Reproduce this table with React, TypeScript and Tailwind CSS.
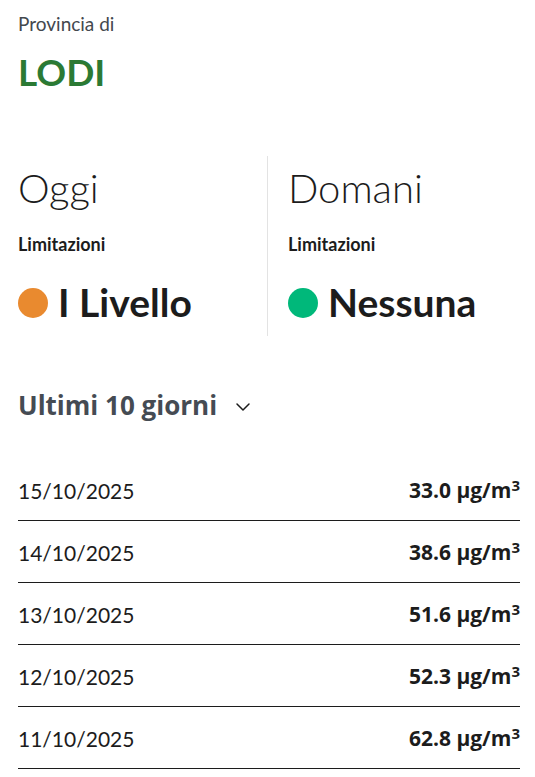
import { ChevronDown } from "lucide-react";

const rows = [
  { date: "15/10/2025", value: "33.0" },
  { date: "14/10/2025", value: "38.6" },
  { date: "13/10/2025", value: "51.6" },
  { date: "12/10/2025", value: "52.3" },
  { date: "11/10/2025", value: "62.8" },
];

const title = { fontFamily: "Lato, 'Noto Sans', sans-serif" };
const open = { fontFamily: "'Open Sans', sans-serif" };

function Day({ label, level, dot }: { label: string; level: string; dot: string }) {
  return (
    <div className="flex flex-col">
      <h2 className="text-[40px] font-light leading-none text-[#1c1c1c]">{label}</h2>
      <p className="mt-[27px] text-[18px] font-bold leading-none text-[#1c1c1c]">Limitazioni</p>
      <div className="mt-[30px] flex items-center gap-[10px]">
        <span className={`size-[30px] rounded-full ${dot}`} />
        <span className="text-[39px] font-bold leading-none text-[#1c1c1c]">{level}</span>
      </div>
    </div>
  );
}

export default function App() {
  return (
    <div className="bg-white pl-[18px] pr-[15px] pt-[14px]" style={title}>
      <p className="text-[19px] leading-none text-[#43484e]">Provincia di</p>
      <h1 className="mt-[20px] text-[37px] font-bold leading-none text-[#2b7a34]">LODI</h1>

      <div className="mt-[66px] grid grid-cols-[250px_1fr]">
        <div className="border-r border-[#e3e3e3] pt-[12px] pb-[14px]">
          <Day label="Oggi" level="I Livello" dot="bg-[#e98a2f]" />
        </div>
        <div className="pl-[20px] pt-[12px] pb-[14px]">
          <Day label="Domani" level="Nessuna" dot="bg-[#00b87a]" />
        </div>
      </div>

      <button className="mt-[55px] flex items-center gap-[14px] text-[#454b53]" style={open}>
        <span className="text-[26px] font-bold leading-none">Ultimi 10 giorni</span>
        <ChevronDown className="mt-[4px] size-[24px] text-[#1c1c1c]" strokeWidth={1.5} />
      </button>

      <ul className="mt-[40px]">
        {rows.map((r) => (
          <li
            key={r.date}
            className="flex h-[62px] items-center justify-between border-b border-[#1c1c1c] pt-[2px] text-[#1c1c1c]"
          >
            <span className="text-[21px] leading-none">{r.date}</span>
            <span className="text-[21px] font-bold leading-none" style={open}>
              {r.value} μg/m<sup className="text-[15px]">3</sup>
            </span>
          </li>
        ))}
      </ul>
    </div>
  );
}
